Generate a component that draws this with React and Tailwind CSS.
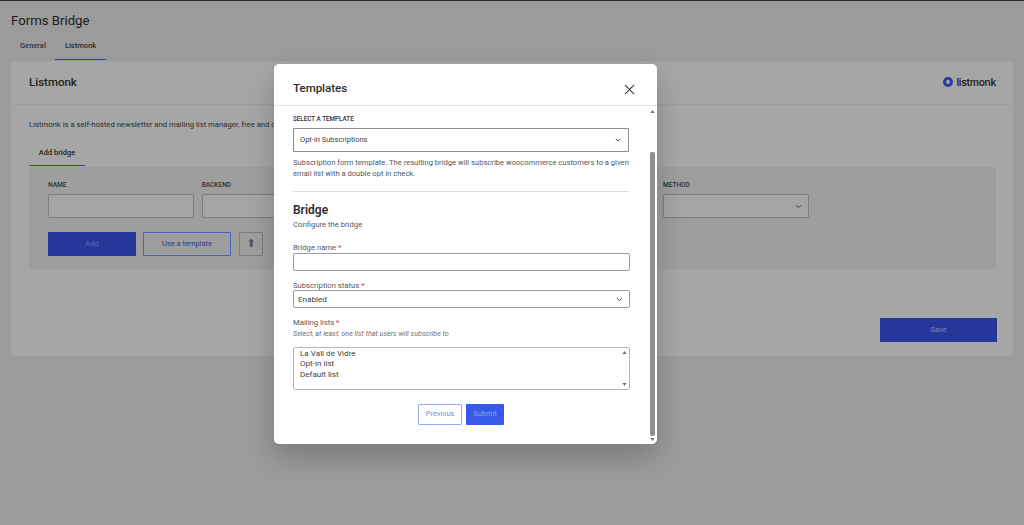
const Chevron = ({ className = "" }) => (
  <svg viewBox="0 0 24 24" className={className} fill="none" stroke="currentColor" strokeWidth="2.6" strokeLinecap="round" strokeLinejoin="round">
    <path d="M6 9l6 6 6-6" />
  </svg>
);

const BgField = ({ label, select }) => (
  <div className="flex w-[146px] flex-col">
    <div className="flex h-[12px] items-center text-[6.5px] font-medium uppercase leading-none text-[#2e2e2e]">{label}</div>
    <div className="mt-[3px] flex h-[24px] items-center justify-end rounded-[1px] border border-[#7d7d7d] bg-[#a5a5a5] pr-[5px] text-[#3a3a3a]">
      {select && <Chevron className="h-[9px] w-[9px]" />}
    </div>
  </div>
);

const Req = () => <span className="text-[#d63638]"> *</span>;

const Tri = ({ down }) => (
  <svg viewBox="0 0 8 6" className="h-[3px] w-[5px]" fill="#6b6b6b">
    <path d={down ? "M0 0h8L4 6z" : "M4 0l4 6H0z"} />
  </svg>
);

export default function App() {
  return (
    <div className="relative h-[525px] w-[1024px] overflow-hidden bg-[#9b9b9b] font-['Roboto',sans-serif] antialiased">
      <div className="h-px bg-[#2b2f33]" />
      <div className="px-[11px]">
        <h1 className="mt-[12px] h-[16px] text-[13.2px] font-normal leading-[16px] text-[#1c1c1c]">Forms Bridge</h1>
        <div className="mt-[3px] flex h-[28px] pl-[9px]">
          <div className="flex w-[36px] items-center text-[7.5px] font-medium text-[#333]">General</div>
          <div className="-ml-[1px] flex w-[51px] items-center justify-center border-b border-[#3045a8] text-[7.5px] font-medium text-[#2c2c2c]">Listmonk</div>
        </div>
        <div className="mt-px h-[295px] w-[1002px] rounded-[4px] bg-[#a6a6a6]">
          <div className="flex h-[44px] items-center justify-between border-b border-[#9e9e9e] pl-[18px] pr-[17px]">
            <h2 className="text-[11.5px] font-medium text-[#222]">Listmonk</h2>
            <div className="flex items-center gap-[3px]">
              <div className="h-[10px] w-[10px] rounded-full border-[3px] border-[#2a3a9f]" />
              <span className="font-['Inter',sans-serif] text-[10.2px] font-semibold leading-none tracking-[-0.3px] text-[#262626]">listmonk</span>
            </div>
          </div>
          <p className="mt-[15px] h-[10px] pl-[18px] text-[7.7px] leading-[10px] text-[#2c2c2c]">Listmonk is a self-hosted newsletter and mailing list manager, free and open source.</p>
          <div className="ml-[18px] mt-[10px] flex h-[26px] w-[56px] items-center justify-center border-b border-[#3045a8] text-[7.5px] font-medium text-[#222]">Add bridge</div>
          <div className="ml-[18px] mt-px h-[102px] w-[967px] bg-[#9e9e9e] pl-[19px] pt-[12px]">
            <div className="flex gap-[7.75px]">
              <BgField label="Name" />
              <BgField label="Backend" select />
              <BgField label="Endpoint" />
              <BgField label="Format" select />
              <BgField label="Method" select />
            </div>
            <div className="mt-[14px] flex gap-[7px]">
              <button className="h-[24px] w-[88px] rounded-[1px] bg-[#253799] text-[7.5px] text-[#5f6cb0]">Add</button>
              <button className="h-[24px] w-[88px] rounded-[1px] border border-[#4a5fc0] text-[7.5px] text-[#25379a]">Use a template</button>
              <button className="ml-px flex h-[24px] w-[24px] items-center justify-center rounded-[1px] border border-[#7d7d7d] font-['DejaVu_Sans',sans-serif] text-[11px] text-[#505050]">⬆</button>
            </div>
          </div>
          <div className="mt-[49px] flex justify-end pr-[16px]">
            <button className="h-[24px] w-[117px] bg-[#253799] text-[7.5px] text-[#7a85bd]">Save</button>
          </div>
        </div>
      </div>

      <div className="absolute left-[274px] top-[64px] flex h-[380px] w-[383px] flex-col overflow-hidden rounded-[5px] bg-white shadow-[0_12px_28px_rgba(0,0,0,0.22)]">
        <div className="flex h-[42px] shrink-0 items-center justify-between border-b border-[#e4e4e4] pl-[19px] pr-[22px] pt-[9px]">
          <h2 className="text-[11.5px] font-medium text-[#2b2b2b]">Templates</h2>
          <svg viewBox="0 0 12 12" className="h-[11px] w-[11px]" fill="none" stroke="#333" strokeWidth="1.1">
            <path d="M1 1l10 10M11 1L1 11" />
          </svg>
        </div>
        <div className="flex min-h-0 flex-1">
          <div className="w-[375px] pl-[19px] pr-[20px] pt-[9px]">
            <div className="flex h-[10px] items-center text-[6.3px] font-medium uppercase text-[#333]">Select a template</div>
            <div className="mt-[3px] flex h-[24px] w-[336px] items-center justify-between rounded-[1px] border border-[#8c8f94] pl-[6px] pr-[6px] text-[7.5px] text-[#3c434a]">
              Opt-in Subscriptions
              <Chevron className="h-[8px] w-[8px]" />
            </div>
            <p className="mt-[5px] w-[338px] text-[7.6px] leading-[11px] text-[#50575e]">Subscription form template. The resulting bridge will subscribe woocommerce customers to a given email list with a double opt in check.</p>
            <div className="mt-[12px] h-px w-[336px] bg-[#dcdcdc]" />
            <h3 className="mt-[11px] h-[14px] text-[12px] font-semibold leading-[14px] text-[#2b2b2b]">Bridge</h3>
            <p className="mt-[3px] h-[10px] text-[7.7px] leading-[10px] text-[#50575e]">Configure the bridge</p>
            <label className="mt-[13px] block h-[10px] text-[7.7px] leading-[10px] text-[#50575e]">Bridge name<Req /></label>
            <div className="h-[18px] w-[337px] rounded-[2px] border border-[#9a9da1]" />
            <label className="mt-[10px] block h-[9px] text-[7.7px] leading-[10px] text-[#50575e]">Subscription status<Req /></label>
            <div className="flex h-[18px] w-[337px] items-center justify-between rounded-[2px] border border-[#9a9da1] pl-[4px] pr-[5px] text-[8.1px] text-[#3c434a]">
              Enabled
              <Chevron className="h-[9px] w-[9px]" />
            </div>
            <label className="mt-[10px] block h-[9px] text-[7.7px] leading-[10px] text-[#50575e]">Mailing lists<Req /></label>
            <p className="mt-[2px] h-[9px] text-[7.2px] italic leading-[10px] text-[#6f6f6f]">Select, at least, one list that users will subscribe to</p>
            <div className="relative mt-[9px] flex h-[43px] w-[337px] justify-between rounded-[2px] border border-[#b4b4b4] pl-[6px] pr-[2px] text-[8.1px] leading-[10.3px] text-[#444]">
              <div className="flex flex-col">
                <span>La Vall de Vidre</span>
                <span>Opt-in list</span>
                <span>Default list</span>
              </div>
              <div className="flex flex-col items-center justify-between py-[3px]">
                <Tri />
                <Tri down />
              </div>
            </div>
            <div className="mt-[14px] flex justify-center gap-[4px]">
              <button className="h-[21px] w-[44px] rounded-[1px] border border-[#9aa8f5] text-[7.3px] font-medium text-[#8f9ef0]">Previous</button>
              <button className="h-[21px] w-[38px] rounded-[1px] bg-[#3858e9] text-[7.3px] font-medium text-[#8092ee]">Submit</button>
            </div>
          </div>
          <div className="flex w-[8px] flex-col items-center justify-between pb-[3px] pr-[2px] pt-[4px]">
            <Tri />
            <div className="mb-[2px] mt-[39px] w-[5px] flex-1 rounded-[2px] bg-[#8f8f8f]" />
            <Tri down />
          </div>
        </div>
      </div>
    </div>
  );
}
